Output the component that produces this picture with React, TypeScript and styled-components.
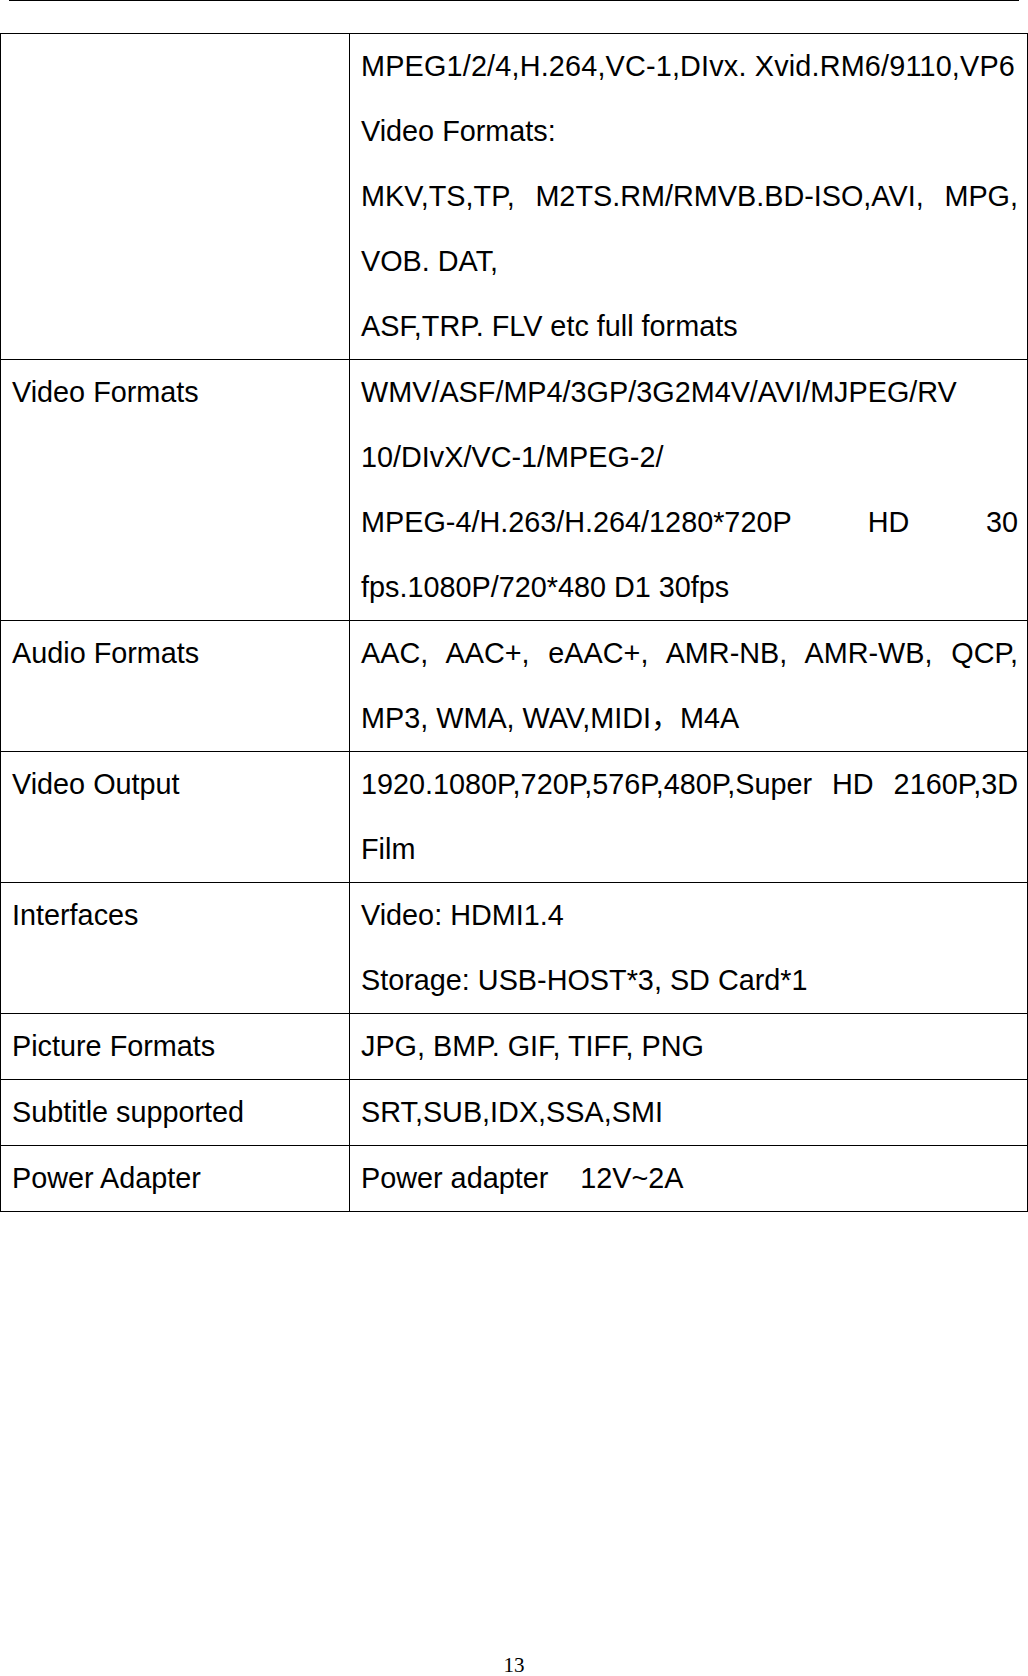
import React from "react";
import styled, { createGlobalStyle } from "styled-components";

const GlobalStyle = createGlobalStyle`
  html, body {
    margin: 0;
    padding: 0;
    background: #ffffff;
    overflow: hidden;
  }
  body {
    font-family: "Liberation Sans", Arial, "Noto Sans CJK SC", sans-serif;
    color: #000;
  }
`;

const Page = styled.div`
  width: 1028px;
  height: 1676px;
  display: flex;
  flex-direction: column;
  overflow: hidden;
`;

const HeaderRule = styled.div`
  margin: 0 9px 32px 9px;
  border-top: 1px solid #000;
  height: 0;
`;

const SpecTable = styled.div`
  display: grid;
  grid-template-columns: 349px 678px;
  border-top: 1px solid #000;
  border-left: 1px solid #000;
  font-family: "Liberation Sans", Arial, "Noto Sans CJK SC", sans-serif;
  font-size: 28.8px;
  line-height: 65px;
  color: #000;
`;

const Cell = styled.div<{ $label?: boolean }>`
  border-right: 1px solid #000;
  border-bottom: 1px solid #000;
  padding: ${(p) => (p.$label ? "0 12px 0 11px" : "0 9px 0 11px")};
  min-height: 65px;
`;

const Line = styled.div<{ $justify?: boolean; $spacing?: number }>`
  white-space: ${(p) => (p.$justify ? "normal" : "pre")};
  text-align: ${(p) => (p.$justify ? "justify" : "left")};
  text-align-last: ${(p) => (p.$justify ? "justify" : "auto")};
  letter-spacing: ${(p) => p.$spacing ?? 0}px;
`;

const Footer = styled.div`
  margin-top: auto;
  margin-bottom: 2px;
  text-align: center;
  font-family: "Liberation Serif", "Times New Roman", serif;
  font-size: 21px;
  line-height: 18px;
`;

type LineSpec = { text: string; justify?: boolean; spacing?: number };
type Row = { label: string; lines: LineSpec[] };

const rows: Row[] = [
  {
    label: "",
    lines: [
      { text: "MPEG1/2/4,H.264,VC-1,DIvx. Xvid.RM6/9110,VP6", spacing: 0.18 },
      { text: "Video Formats:" },
      { text: "MKV,TS,TP,  M2TS.RM/RMVB.BD-ISO,AVI,  MPG,", justify: true },
      { text: "VOB. DAT," },
      { text: "ASF,TRP. FLV etc full formats" },
    ],
  },
  {
    label: "Video Formats",
    lines: [
      { text: "WMV/ASF/MP4/3GP/3G2M4V/AVI/MJPEG/RV" },
      { text: "10/DIvX/VC-1/MPEG-2/" },
      { text: "MPEG-4/H.263/H.264/1280*720P HD 30", justify: true },
      { text: "fps.1080P/720*480 D1 30fps" },
    ],
  },
  {
    label: "Audio Formats",
    lines: [
      { text: "AAC, AAC+, eAAC+, AMR-NB, AMR-WB, QCP,", justify: true },
      { text: "MP3, WMA, WAV,MIDI\uFF0CM4A" },
    ],
  },
  {
    label: "Video Output",
    lines: [
      { text: "1920.1080P,720P,576P,480P,Super HD 2160P,3D", justify: true },
      { text: "Film" },
    ],
  },
  {
    label: "Interfaces",
    lines: [{ text: "Video: HDMI1.4" }, { text: "Storage: USB-HOST*3, SD Card*1" }],
  },
  { label: "Picture Formats", lines: [{ text: "JPG, BMP. GIF, TIFF, PNG" }] },
  { label: "Subtitle supported", lines: [{ text: "SRT,SUB,IDX,SSA,SMI" }] },
  { label: "Power Adapter", lines: [{ text: "Power adapter    12V~2A" }] },
];

export default function App() {
  return (
    <Page>
      <GlobalStyle />
      <HeaderRule />
      <SpecTable>
        {rows.map((row, i) => (
          <React.Fragment key={i}>
            <Cell $label>{row.label}</Cell>
            <Cell>
              {row.lines.map((l, j) => (
                <Line key={j} $justify={l.justify} $spacing={l.spacing}>
                  {l.text}
                </Line>
              ))}
            </Cell>
          </React.Fragment>
        ))}
      </SpecTable>
      <Footer>13</Footer>
    </Page>
  );
}
